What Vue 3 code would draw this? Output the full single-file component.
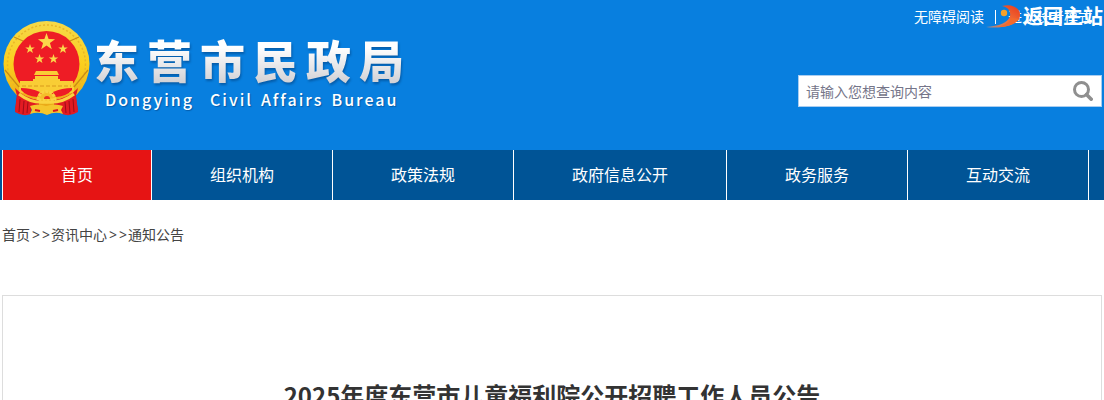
<template>
  <div class="page">
    <header class="header">
      <div class="wrap header-inner">
        <a class="logo" href="#">
          <svg class="emblem" viewBox="0 0 88 96" aria-hidden="true">
            <defs>
              <linearGradient id="gold" x1="0" y1="0" x2="0" y2="1">
                <stop offset="0" stop-color="#f6d94a" />
                <stop offset="0.5" stop-color="#fbcf1e" />
                <stop offset="1" stop-color="#e9a818" />
              </linearGradient>
            </defs>
            <path d="M16 66 L13 90 Q20 97 29 93 L31 80 H57 L59 93 Q68 97 76 90 L72 66Z" fill="#d8141c" />
            <ellipse cx="44.5" cy="44" rx="43" ry="43" fill="url(#gold)" />
            <ellipse cx="44.5" cy="44" rx="39" ry="39" fill="none" stroke="#e8b629" stroke-width="1.5" stroke-dasharray="2 2" />
            <path d="M3 50l14 17M86 50l-14 17M12 17l9 4M77 17l-9 4" stroke="#c88b16" stroke-width="1.2" />
            <circle cx="44.5" cy="44" r="33" fill="#ee1c25" />
            <polygon v-for="(s, i) in stars" :key="i" :points="starPoints(s)" fill="#fbd74a" />
            <path d="M34 51h21l2 4H32zM33 56h23v3H33zM31 59h27v2h13v6h1v6H17v-6h1v-6h13z" fill="#f9cd35" />
            <path d="M20 66h49" stroke="#d99a1c" stroke-width="1" stroke-dasharray="4 2" />
            <path d="M19 68q10 0 19 4l-3 5q-11-1-16-7zM70 68q-10 0-19 4l3 5q11-1 16-7z" fill="#ee1c25" />
            <path d="M13 68q9 10 24 12v10q-5-3-9-2l1 6q-8 3-16-2l2-16zM76 68q-9 10-24 12v10q5-3 9-2l-1 6q8 3 16-2l-2-16z" fill="#e21b22" />
            <path d="M18 79l-1 13M22 81l-1 13M26 82l-1 11M71 79l1 13M67 81l1 13M63 82l1 11" stroke="#9d0c18" stroke-width="1" fill="none" />
            <path d="M28 86q8-3 16 0 9-3 17 0l-2 4 2 4q-8-3-16 1-8-4-17-1l2-4z" fill="#f5c52c" />
            <path d="M33 90l5 1M56 90l-5 1" stroke="#d8141c" stroke-width="2" />
            <path d="M36 80a8.500 8.500 0 0 1 17 0z" fill="#f4bd2b" stroke="#f9d241" stroke-width="3" stroke-dasharray="3 1" />
            <path d="M42 79a3 3 0 0 1 6 0z" fill="#e9311f" />
            <path d="M17 74q13 10 27 8 15 2 28-8" fill="none" stroke="#fad340" stroke-width="3" />
          </svg>
          <span class="names">
            <span class="name-cn">东营市民政局</span>
            <span class="name-en">
              <span v-for="word in nameEn" :key="word">{{ word }}</span>
            </span>
          </span>
        </a>
        <div class="tools">
          <div class="links">
            <a href="#">无障碍阅读</a>
            <span class="bar"></span>
            <a href="#">进入长者模式</a>
          </div>
          <form class="search" @submit.prevent>
            <input v-model="keyword" type="text" aria-label="请输入您想查询内容" placeholder="请输入您想查询内容" />
            <button type="submit" aria-label="搜索">
              <svg viewBox="0 0 20 20" fill="none" stroke="#8f8f8f">
                <circle cx="8.5" cy="8.5" r="7" stroke-width="3" />
                <path d="M13.5 13.5l4.7 4.7" stroke-width="3.6" stroke-linecap="round" />
              </svg>
            </button>
          </form>
        </div>
      </div>
      <a class="back" href="#">
        <svg viewBox="0 0 38 24" aria-hidden="true">
          <defs>
            <linearGradient id="flame" x1="0" y1="1" x2="1" y2="0">
              <stop offset="0" stop-color="#9a8a92" />
              <stop offset="0.45" stop-color="#f2743a" />
              <stop offset="1" stop-color="#e8391c" />
            </linearGradient>
          </defs>
          <path d="M17 1C28-2 36 4 35 11c-1 9-17 13-34 11 13-1 22-4 24-11 1-5-2-9-8-10z" fill="url(#flame)" />
          <path d="M12 22q10-2 15-9l7 1q-6 8-22 8z" fill="#f36a2c" />
          <circle cx="19" cy="8" r="3.2" fill="#f6a12b" />
        </svg>
        <span>返回主站</span>
      </a>
    </header>

    <nav class="nav">
      <ul class="wrap nav-list">
        <li v-for="(item, i) in menu" :key="item">
          <a href="#" :class="{ active: i === current }" @click.prevent="current = i">{{ item }}</a>
        </li>
      </ul>
    </nav>

    <main class="wrap">
      <div class="crumbs">
        <template v-for="(c, i) in crumbs" :key="c">
          <template v-if="i > 0"><span class="sep">&gt;</span><span class="sep">&gt;</span></template>
          <a href="#">{{ c }}</a>
        </template>
      </div>
      <article class="article">
        <h1>2025年度东营市儿童福利院公开招聘工作人员公告</h1>
      </article>
    </main>
  </div>
</template>

<script setup>
import { ref } from 'vue'

const keyword = ref('')
const current = ref(0)
const nameEn = ['Dongying', 'Civil', 'Affairs', 'Bureau']
const menu = ['首页', '组织机构', '政策法规', '政府信息公开', '政务服务', '互动交流']
const crumbs = ['首页', '资讯中心', '通知公告']

const stars = [
  { x: 44.5, y: 22, r: 9 },
  { x: 28, y: 29, r: 5 },
  { x: 61, y: 29, r: 5 },
  { x: 37.5, y: 39, r: 5 },
  { x: 51.5, y: 39, r: 5 }
]

function starPoints({ x, y, r }) {
  const pts = []
  for (let i = 0; i < 10; i++) {
    const a = (Math.PI / 5) * i - Math.PI / 2
    const d = i % 2 ? r * 0.4 : r
    pts.push((x + d * Math.cos(a)).toFixed(2) + ',' + (y + d * Math.sin(a)).toFixed(2))
  }
  return pts.join(' ')
}
</script>

<style>
body { margin: 0; background: #fff; }
</style>

<style scoped>
.page { font-family: "Noto Sans", "Noto Sans CJK SC", sans-serif; font-size: 14px; color: #444; }
.page a { color: inherit; text-decoration: none; }
.wrap { max-width: 1100px; margin: 0 auto; }

.header { position: relative; background: #087fdf; color: #fff; }
.header-inner { display: flex; justify-content: space-between; height: 150px; }
.logo { display: flex; align-items: flex-start; gap: 4px; padding-top: 20px; }
.emblem { width: 88px; height: 96px; }
.names { display: flex; flex-direction: column; padding-top: 13px; }
.name-cn {
  font-size: 45px; line-height: 58px; font-weight: 900; letter-spacing: 8px;
  background: linear-gradient(#fff 25%, #d2d2d6 85%); -webkit-background-clip: text; background-clip: text;
  color: transparent; filter: drop-shadow(1px 2px 1px rgba(0, 40, 90, 0.4));
}
.name-en {
  display: flex; gap: 8px; padding-left: 11px; font-family: "Noto Sans CJK SC", sans-serif; font-size: 16px;
  line-height: 16px; font-weight: 500; letter-spacing: 2px; text-shadow: 1px 1px 1px rgba(0, 40, 90, 0.4);
}
.name-en span:first-child { margin-right: 8px; }

.tools { display: flex; flex-direction: column; align-items: flex-end; gap: 47px; padding-top: 6px; }
.links { display: flex; align-items: center; line-height: 22px; padding-right: 10px; }
.bar { width: 1px; height: 14px; margin: 0 12px 0 11px; background: #fff; }
.search { display: flex; box-sizing: border-box; width: 304px; height: 32px; border: 1px solid #a9cdf0; background: #fff; }
.search input {
  flex: 1; min-width: 0; border: 0; outline: 0; padding: 0 7px; background: none;
  font: inherit; color: #333;
}
.search input::placeholder { color: #757589; opacity: 1; }
.search button { display: flex; align-items: center; padding: 0 8px; border: 0; background: none; cursor: pointer; }
.search svg { width: 20px; height: 20px; }

.back { position: absolute; top: 5px; right: 1px; display: flex; align-items: center; font-size: 20px; line-height: 24px; font-weight: 700; }
.back svg { width: 38px; height: 24px; }

.nav { background: #005496; }
.nav-list { display: flex; padding: 0; list-style: none; }
.nav-list li { border-right: 1px solid #fff; }
.nav-list li:first-child { border-left: 1px solid #fff; }
.nav-list a { display: block; padding: 0 58px; font-size: 16px; line-height: 50px; color: #fff; white-space: nowrap; }
.nav-list a.active { background: #e61414; }

.crumbs { display: flex; line-height: 70px; }
.crumbs a { margin-right: 1px; }
.sep { padding: 0 1px; }
.article { margin-top: 25px; border: 1px solid #ddd; padding: 79px 20px 60px; }
.article h1 {
  margin: 0; font-family: "Noto Sans CJK SC", sans-serif; font-size: 24px; line-height: 40px;
  font-weight: 700; text-align: center; color: #333;
}
</style>
